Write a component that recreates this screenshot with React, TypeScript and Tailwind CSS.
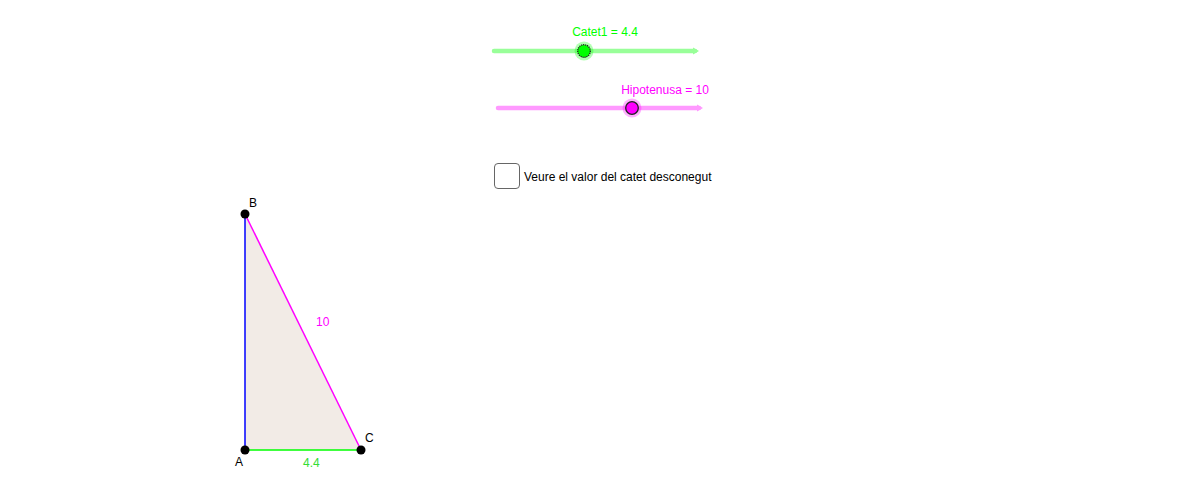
import React from "react";

export default function App() {
  const font = '"Liberation Sans", Arial, sans-serif';
  return (
    <div className="relative w-[1187px] h-[484px] bg-white overflow-hidden" style={{ fontFamily: font }}>
      <svg width="1187" height="484" className="absolute left-0 top-0" style={{ fontFamily: font }}>
        {/* Slider Catet1 */}
        <line x1="494" y1="51" x2="695" y2="51" stroke="#99ff99" strokeWidth="4.5" strokeLinecap="round" />
        <path d="M693 47.5 L699 51 L693 54.5 Z" fill="#99ff99" />
        <circle cx="584" cy="51" r="9.5" fill="#00ff00" opacity="0.3" />
        <circle cx="584" cy="51" r="6.3" fill="#00ff00" stroke="#222" strokeWidth="1.3" strokeDasharray="1.2 0.8" />
        <text x="605" y="35.5" fontSize="12" fill="#00ff00" textAnchor="middle">Catet1 = 4.4</text>

        {/* Slider Hipotenusa */}
        <line x1="498" y1="108" x2="699" y2="108" stroke="#ff99ff" strokeWidth="4.5" strokeLinecap="round" />
        <path d="M697 104.5 L703 108 L697 111.5 Z" fill="#ff99ff" />
        <circle cx="632" cy="108" r="9.5" fill="#ff00ff" opacity="0.3" />
        <circle cx="632" cy="108" r="6.3" fill="#ff00ff" stroke="#222" strokeWidth="1.3" />
        <text x="665" y="93.5" fontSize="12" fill="#ff00ff" textAnchor="middle">Hipotenusa = 10</text>

        {/* Triangle */}
        <polygon points="245,214 245,450 361,450" fill="#f2ebe6" />
        <line x1="245" y1="214" x2="245" y2="450" stroke="#0000ff" strokeWidth="1.5" />
        <line x1="245" y1="450" x2="361" y2="450" stroke="#00ff00" strokeWidth="1.5" />
        <line x1="245" y1="214" x2="361" y2="450" stroke="#ff00ff" strokeWidth="1.5" />
        <circle cx="245" cy="214" r="4.5" fill="#000" />
        <circle cx="245" cy="450" r="4.5" fill="#000" />
        <circle cx="361" cy="450" r="4.5" fill="#000" />
        <text x="249" y="207" fontSize="12" fill="#000">B</text>
        <text x="235" y="466" fontSize="12" fill="#000">A</text>
        <text x="365" y="442" fontSize="12" fill="#000">C</text>
        <text x="316" y="325.5" fontSize="12" fill="#ff00ff">10</text>
        <text x="303" y="466.5" fontSize="12" fill="#33dd33">4.4</text>
      </svg>

      <div className="absolute left-[494px] top-[163px] flex items-center gap-[4px]">
        <div className="w-[26px] h-[26px] rounded-[4px] border border-[#666] bg-white" />
        <span className="text-[12px] text-black leading-none pt-[2px]">Veure el valor del catet desconegut</span>
      </div>
    </div>
  );
}
